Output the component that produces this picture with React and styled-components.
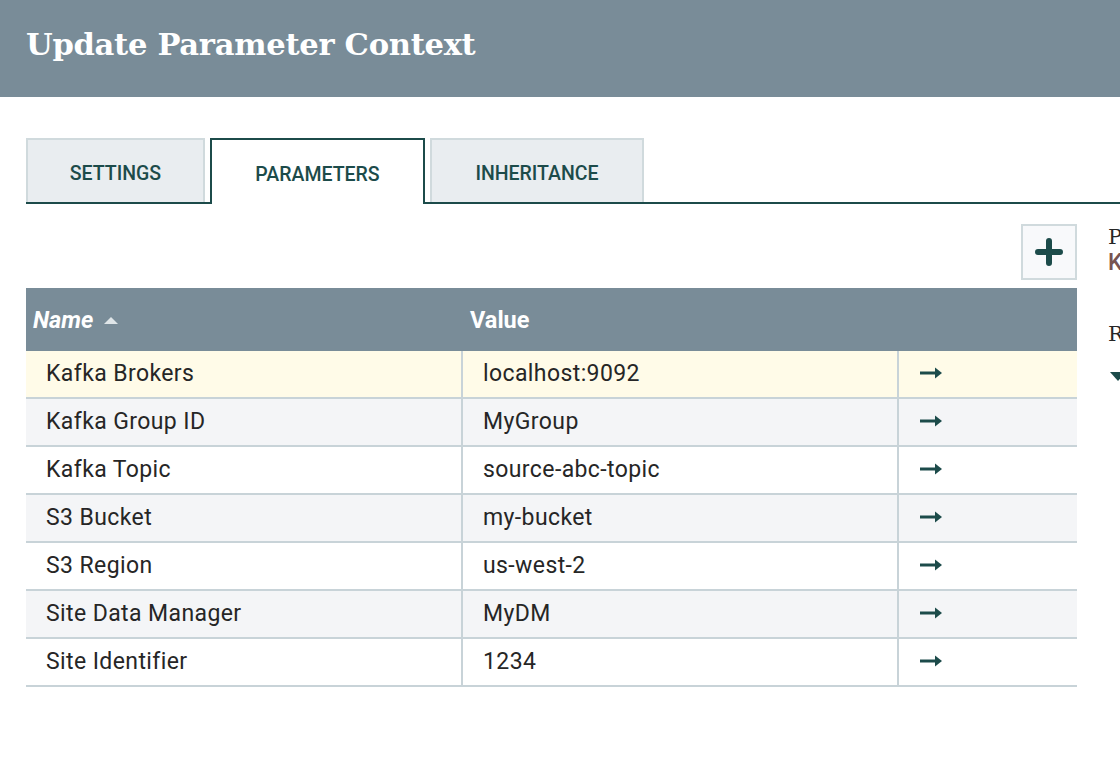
import React from "react";
import styled, { createGlobalStyle } from "styled-components";

const GlobalStyle = createGlobalStyle`
  html, body {
    margin: 0;
    padding: 0;
    background: #ffffff;
  }
  body {
    font-family: Roboto, "Liberation Sans", sans-serif;
    overflow: hidden;
  }
`;

const params = [
  { name: "Kafka Brokers", value: "localhost:9092" },
  { name: "Kafka Group ID", value: "MyGroup" },
  { name: "Kafka Topic", value: "source-abc-topic" },
  { name: "S3 Bucket", value: "my-bucket" },
  { name: "S3 Region", value: "us-west-2" },
  { name: "Site Data Manager", value: "MyDM" },
  { name: "Site Identifier", value: "1234" },
];

const tabs = [
  { id: "SETTINGS", width: 179 },
  { id: "PARAMETERS", width: 215 },
  { id: "INHERITANCE", width: 214 },
];

function App() {
  const [selected, setSelected] = React.useState(0);
  const [tab, setTab] = React.useState("PARAMETERS");

  return (
    <Page>
      <GlobalStyle />
      <Header>
        <Title>Update Parameter Context</Title>
      </Header>
      <Body>
        <TabBar>
          {tabs.map((t) => (
            <Tab
              key={t.id}
              $width={t.width}
              $active={tab === t.id}
              onClick={() => setTab(t.id)}
            >
              {t.id}
            </Tab>
          ))}
        </TabBar>
        <Content>
          <TableArea>
            <Toolbar>
              <AddButton aria-label="Add parameter">
                <svg width="28" height="28" viewBox="0 0 28 28">
                  <path
                    d="M14 3v22M3 14h22"
                    stroke="#1c4b4a"
                    strokeWidth="6"
                    strokeLinecap="round"
                  />
                </svg>
              </AddButton>
            </Toolbar>
            <Table>
              <HeadRow>
                <HeadCell $sorted>
                  Name
                  <SortArrow />
                </HeadCell>
                <HeadCell>Value</HeadCell>
                <HeadCell />
              </HeadRow>
              {params.map((p, i) => (
                <Row
                  key={p.name}
                  $odd={i % 2 === 1}
                  $selected={selected === i}
                  onClick={() => setSelected(i)}
                >
                  <Cell>{p.name}</Cell>
                  <Cell>{p.value}</Cell>
                  <Cell $last>
                    <svg width="26" height="12" viewBox="0 0 26 12">
                      <path d="M1 4.5h16v3H1z" fill="#1c4b4a" />
                      <path d="M16 0.5l7 5.5-7 5.5z" fill="#1c4b4a" />
                    </svg>
                  </Cell>
                </Row>
              ))}
            </Table>
          </TableArea>
          <Details>
            <Label>Parameter</Label>
            <Value>{params[selected].name}</Value>
            <Label $gap>Referencing Components</Label>
            <Caret />
          </Details>
        </Content>
      </Body>
    </Page>
  );
}

export default App;

const Page = styled.div`
  width: 1120px;
  height: 780px;
  overflow: hidden;
  background: #ffffff;
`;

const Header = styled.div`
  display: flex;
  align-items: center;
  height: 97px;
  padding: 0 26px;
  background-color: #798c98;
`;

const Title = styled.h1`
  margin: 0 0 10px 0;
  font-family: "DejaVu Serif", "Liberation Serif", serif;
  font-weight: bold;
  font-size: 30.6px;
  letter-spacing: -0.3px;
  color: #ffffff;
`;

const Body = styled.div`
  padding: 41px 0 0 26px;
`;

const TabBar = styled.div`
  display: flex;
  gap: 5px;
  height: 64px;
  border-bottom: 2px solid #1c4b4a;
  width: 1200px;
`;

const Tab = styled.div`
  display: flex;
  align-items: center;
  justify-content: center;
  box-sizing: border-box;
  height: ${(p) => (p.$active ? "66px" : "64px")};
  margin-bottom: ${(p) => (p.$active ? "-2px" : "0")};
  width: ${(p) => p.$width}px;
  padding-top: 5px;
  border: 2px solid ${(p) => (p.$active ? "#1c4b4a" : "#d0dadd")};
  border-bottom: none;
  background-color: ${(p) => (p.$active ? "#ffffff" : "#e9edf0")};
  font-family: Roboto, "Liberation Sans", sans-serif;
  font-weight: 500;
  font-size: 19.5px;
  color: #1c4b4a;
  cursor: pointer;
`;

const Content = styled.div`
  display: flex;
  gap: 31px;
`;

const TableArea = styled.div`
  display: flex;
  flex-direction: column;
  width: 1051px;
  flex-shrink: 0;
`;

const Toolbar = styled.div`
  display: flex;
  justify-content: flex-end;
  padding: 20px 0 8px;
`;

const AddButton = styled.button`
  display: flex;
  align-items: center;
  justify-content: center;
  width: 56px;
  height: 56px;
  padding: 0;
  background-color: #f8f9fb;
  border: 2px solid #d0dadd;
  cursor: pointer;
`;

const Table = styled.div`
  display: flex;
  flex-direction: column;
`;

const HeadRow = styled.div`
  display: grid;
  grid-template-columns: 437px 436px 1fr;
  height: 63px;
  background-color: #798c98;
`;

const HeadCell = styled.div`
  display: flex;
  align-items: center;
  gap: 11px;
  padding: 0 7px;
  font-family: Roboto, "Liberation Sans", sans-serif;
  font-weight: bold;
  font-size: 23.5px;
  font-style: ${(p) => (p.$sorted ? "italic" : "normal")};
  color: #ffffff;
`;

const SortArrow = styled.span`
  width: 0;
  height: 0;
  margin-top: 2px;
  border-left: 7px solid transparent;
  border-right: 7px solid transparent;
  border-bottom: 7px solid #dfe5e8;
`;

const Row = styled.div`
  display: grid;
  grid-template-columns: 437px 436px 1fr;
  height: 46px;
  border-bottom: 2px solid #c8d3d8;
  background-color: ${(p) =>
    p.$selected ? "#fffbe8" : p.$odd ? "#f4f5f7" : "#ffffff"};
  cursor: pointer;
`;

const Cell = styled.div`
  display: flex;
  align-items: center;
  padding: 0 20px 2px;
  border-right: ${(p) => (p.$last ? "none" : "2px solid #c8d3d8")};
  font-family: Roboto, "Liberation Sans", sans-serif;
  font-size: 23px;
  letter-spacing: 0.4px;
  color: #262626;
  white-space: nowrap;
`;

const Details = styled.div`
  display: flex;
  flex-direction: column;
  padding-top: 21px;
  min-width: 300px;
`;

const Label = styled.div`
  margin-top: ${(p) => (p.$gap ? "46px" : "0")};
  font-family: "DejaVu Serif", "Liberation Serif", serif;
  font-size: 21px;
  color: #262626;
`;

const Value = styled.div`
  margin-top: 0;
  font-family: Roboto, "Liberation Sans", sans-serif;
  font-weight: 500;
  font-size: 23px;
  color: #775351;
`;

const Caret = styled.span`
  width: 0;
  height: 0;
  margin: 26px 0 0 2px;
  border-left: 8px solid transparent;
  border-right: 8px solid transparent;
  border-top: 9px solid #1c4b4a;
`;
